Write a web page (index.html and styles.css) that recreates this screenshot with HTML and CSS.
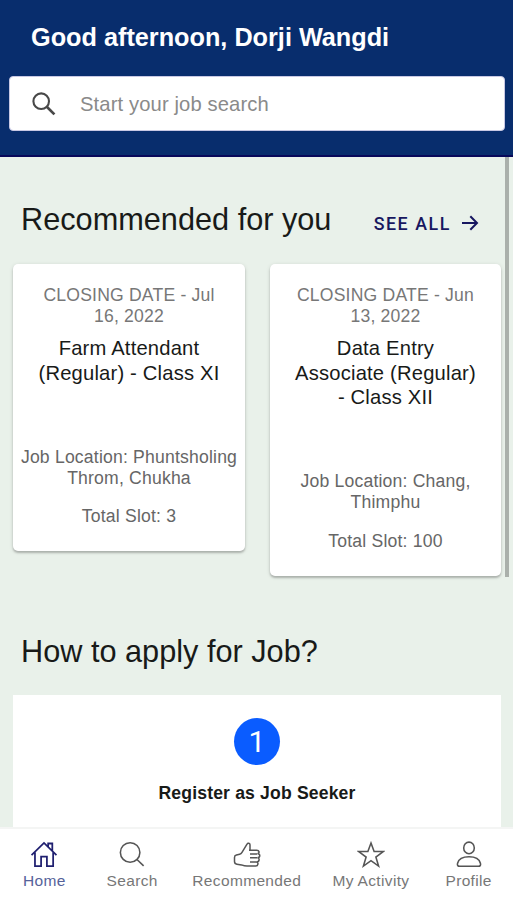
FILE: index.html
```html
<!DOCTYPE html>
<html lang="en">
<head>
<meta charset="utf-8">
<title>Job Portal</title>
<link rel="stylesheet" href="styles.css">
</head>
<body>
<header class="header">
  <h1 class="greeting">Good afternoon, Dorji Wangdi</h1>
  <div class="search">
    <svg class="search-icon" viewBox="0 0 24 24" fill="none" stroke="#484848" stroke-width="2.1"><circle cx="9.2" cy="9.2" r="7.8"/><path d="M14.8 14.8l7.6 7.6" stroke-width="2.7"/></svg>
    <span>Start your job search</span>
  </div>
</header>
<main class="content">
  <div class="scrollbar"></div>
  <section>
    <div class="section-head">
      <h2 class="section-title">Recommended for you</h2>
      <a class="see-all">SEE ALL
        <svg class="arrow" viewBox="0 0 18 18" fill="none" stroke="#171760" stroke-width="2"><path d="M1 9h15M9.300 2.200L16 9l-6.700 6.800"/></svg>
      </a>
    </div>
    <div class="cards">
      <article class="card">
        <p class="meta">CLOSING DATE - Jul<br>16, 2022</p>
        <h3 class="job">Farm Attendant<br>(Regular) - Class XI</h3>
        <p class="meta location">Job Location: Phuntsholing<br>Throm, Chukha</p>
        <p class="meta slot">Total Slot: 3</p>
      </article>
      <article class="card">
        <p class="meta">CLOSING DATE - Jun<br>13, 2022</p>
        <h3 class="job">Data Entry<br>Associate (Regular)<br>- Class XII</h3>
        <p class="meta location">Job Location: Chang,<br>Thimphu</p>
        <p class="meta slot">Total Slot: 100</p>
      </article>
    </div>
  </section>
  <section class="how">
    <h2 class="section-title">How to apply for Job?</h2>
    <div class="step">
      <span class="number">1</span>
      <p class="step-title">Register as Job Seeker</p>
    </div>
  </section>
</main>
<nav class="nav">
  <a class="tab home active">
    <svg viewBox="0 0 26 26"><path d="M1 13.500L13 1.800l12 11.700M4.300 11v13.300h5.900v-9.200h5.600v9.200h6V11M17 5.300V2.400h4v7"/></svg>
    <span>Home</span>
  </a>
  <a class="tab find">
    <svg viewBox="0 0 26 26"><circle cx="11.200" cy="11" r="9.400"/><path d="M17.800 17.800l6.400 6.200"/></svg>
    <span>Search</span>
  </a>
  <a class="tab recommended">
    <svg viewBox="0 0 28 26"><path d="M17 9.500V3.200c0-1.500-2.200-2.200-3-.6L9 10.800c-.6 1-1.200 1.600-2.400 1.900l-3.200.8c-1.200.3-1.900 1.200-1.900 2.400v4.200c0 1.600.8 2.500 2.400 2.700l4.600.6c2 .8 3.500 1.200 5.500 1.200h8.700c2.600 0 3-3.700.9-4.200 3 0 3.400-3.800.8-4.200 3.200-.3 3.100-3.700.1-3.900 2.400-.7 1.900-3.600-.8-3.600H16M17 12.400h7M17 16.300h7M17 20.400h6.500"/></svg>
    <span>Recommended</span>
  </a>
  <a class="tab activity">
    <svg viewBox="0 0 26 26"><path d="M13 2l3 8.200h8.700l-7 5.300 2.600 8.600L13 19l-7.300 5.100 2.600-8.600-7-5.300H10z"/></svg>
    <span>My Activity</span>
  </a>
  <a class="tab profile">
    <svg viewBox="0 0 26 26"><ellipse cx="13" cy="6.700" rx="5.100" ry="5.600"/><path d="M2 21.400c1.100-4.300 5.700-6.200 11-6.200s9.900 1.900 11 6.200c.5 1.900-.2 3-1.900 3H3.900c-1.700 0-2.400-1.100-1.900-3z"/></svg>
    <span>Profile</span>
  </a>
</nav>
</body>
</html>
```
FILE: styles.css
```css
* { box-sizing: border-box; }
body {
  margin: 0;
  height: 900px;
  overflow: hidden;
  display: flex;
  flex-direction: column;
  background: #e9f1ea;
  color: #181a18;
  font-family: "Liberation Sans", Arial, sans-serif;
}
h1, h2, h3, p { margin: 0; font-weight: 400; }
.header {
  height: 157px;
  padding: 21px 8px 0 9px;
  background: #082d6d;
  border-bottom: 2px solid #08085a;
}
.greeting {
  padding-left: 22px;
  font-size: 25.25px;
  font-weight: 700;
  line-height: 32px;
  color: #fff;
}
.search {
  display: flex;
  align-items: center;
  height: 55px;
  margin-top: 23px;
  padding: 1px 0 0 22px;
  gap: 24px;
  background: #fff;
  border: 1px solid #c8c8e4;
  border-radius: 4px;
  color: #8a8a8a;
  font-size: 20.2px;
  letter-spacing: .006em;
}
.search-icon { width: 24px; height: 24px; }
.content {
  position: relative;
  flex: 1;
  min-height: 0;
  overflow: hidden;
  padding: 0 12px 0 13px;
}
.scrollbar {
  position: absolute;
  top: 0;
  right: 4px;
  width: 4px;
  height: 420px;
  background: #aab0ab;
}
.section-head {
  display: flex;
  align-items: flex-start;
  justify-content: space-between;
  height: 107px;
  padding: 45px 22px 0 0;
}
.section-title {
  padding-left: 8px;
  font-size: 30.7px;
  line-height: 36px;
  white-space: nowrap;
}
.see-all {
  display: flex;
  align-items: center;
  gap: 10px;
  height: 26px;
  margin-top: 8px;
  color: #171760;
  font: 500 17.8px Roboto, sans-serif;
  letter-spacing: .089em;
}
.arrow { width: 18px; height: 18px; }
.cards {
  display: grid;
  grid-template-columns: 232px 231px;
  justify-content: space-between;
  align-items: start;
}
.card {
  padding: 20.5px 0 24px;
  background: #fff;
  border-radius: 5px;
  box-shadow: 0 2px 2px rgba(0, 0, 0, .2), 0 1px 4px rgba(0, 0, 0, .13);
  text-align: center;
  white-space: nowrap;
}
.meta {
  color: #777;
  font-size: 17.6px;
  line-height: 21px;
  letter-spacing: .0107em;
}
.job {
  margin: 9.5px 0 61.5px;
  font-size: 20.2px;
  line-height: 24.5px;
  letter-spacing: .0094em;
}
.location, .slot { color: #666; }
.slot { margin-top: 17.5px; }
.how { margin-top: 58px; }
.step {
  display: flex;
  flex-direction: column;
  align-items: center;
  height: 132px;
  margin-top: 25px;
  padding-top: 23px;
  background: #fff;
}
.number {
  width: 46px;
  height: 47px;
  border-radius: 50%;
  background: #0a5cff;
  color: #fff;
  font: 30px/48px Roboto, sans-serif;
  text-align: center;
}
.step-title {
  margin-top: 18px;
  font-size: 17.6px;
  font-weight: 700;
  line-height: 21px;
  letter-spacing: .009em;
}
.nav {
  display: flex;
  height: 73px;
  padding: 12px 0 0 .5px;
  background: #fff;
  border-top: 2px solid #f4f5f4;
}
.tab {
  display: flex;
  flex-direction: column;
  align-items: center;
  color: #777;
  font-size: 15.5px;
  line-height: 20px;
  letter-spacing: .35px;
  white-space: nowrap;
}
.tab svg {
  height: 27px;
  width: 28px;
  margin-bottom: 3px;
  fill: none;
  stroke: #555;
  stroke-width: 1.5;
}
.home { width: 88px; }
.find { width: 88px; }
.recommended { width: 142px; }
.activity { width: 107px; }
.profile { width: 89px; }
.active { color: #55629a; }
.active svg { stroke: #202070; stroke-width: 1.7; }
```
